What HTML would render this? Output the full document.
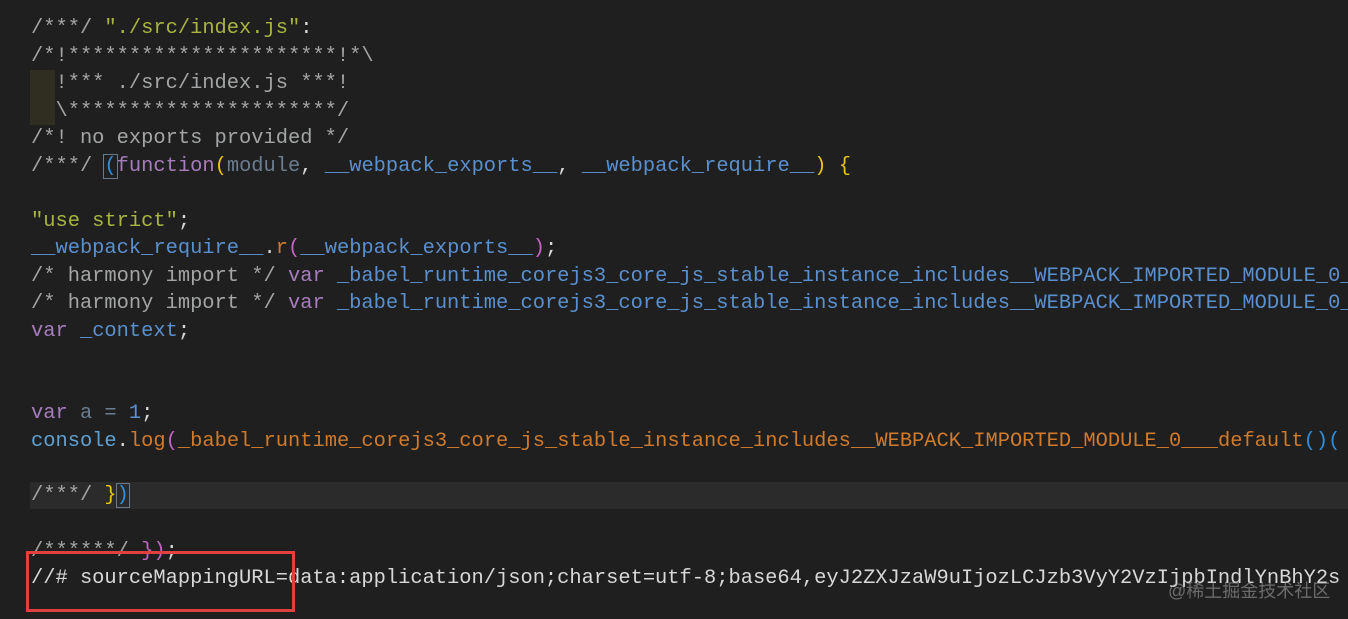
<!DOCTYPE html>
<html><head><meta charset="utf-8"><style>
html,body{margin:0;padding:0;background:#1f1f1f;width:1348px;height:619px;overflow:hidden}
.l{position:absolute;left:31px;height:27.5px;line-height:27.5px;font-family:"Liberation Mono",monospace;font-size:20.4px;white-space:pre;color:#d4d4d4}
.c{color:#a3a5a6}.s{color:#a9b53f}.k{color:#a77cbc}.p{color:#6c7d8f}.b{color:#5a90cf}.o{color:#d07a2c}.y{color:#e9c51a}.m{color:#c464c4}.cb{color:#2f8fde}.w{color:#d8d8d8}
</style></head><body>
<div style="position:absolute;left:30px;top:70px;width:25px;height:55px;background:#2f2e20"></div>
<div style="position:absolute;left:30px;top:482px;width:1318px;height:27px;background:#2b2b2b"></div>
<div class="l" style="top:15px"><span class="c">/***/ </span><span class="s">"./src/index.js"</span><span class="w">:</span></div>
<div class="l" style="top:42.5px"><span class="c">/*!**********************!*\</span></div>
<div class="l" style="top:70px"><span class="c">  !*** ./src/index.js ***!</span></div>
<div class="l" style="top:97.5px"><span class="c">  \**********************/</span></div>
<div class="l" style="top:125px"><span class="c">/*! no exports provided */</span></div>
<div class="l" style="top:152.5px"><span class="c">/***/ </span><span class="cb" style="outline:1px solid #6a7a8a">(</span><span class="k">function</span><span class="y">(</span><span class="p">module</span><span class="w">, </span><span class="b">__webpack_exports__</span><span class="w">, </span><span class="b">__webpack_require__</span><span class="y">) {</span></div>
<div class="l" style="top:207.5px"><span class="s">"use strict"</span><span class="w">;</span></div>
<div class="l" style="top:235px"><span class="b">__webpack_require__</span><span class="w">.</span><span class="o">r</span><span class="m">(</span><span class="b">__webpack_exports__</span><span class="m">)</span><span class="w">;</span></div>
<div class="l" style="top:262.5px"><span class="c">/* harmony import */ </span><span class="k">var</span><span class="b"> _babel_runtime_corejs3_core_js_stable_instance_includes__WEBPACK_IMPORTED_MODULE_0__</span></div>
<div class="l" style="top:290px"><span class="c">/* harmony import */ </span><span class="k">var</span><span class="b"> _babel_runtime_corejs3_core_js_stable_instance_includes__WEBPACK_IMPORTED_MODULE_0__</span></div>
<div class="l" style="top:317.5px"><span class="k">var</span><span class="b"> _context</span><span class="w">;</span></div>
<div class="l" style="top:400px"><span class="k">var</span><span class="p"> a = </span><span class="b">1</span><span class="w">;</span></div>
<div class="l" style="top:427.5px"><span class="b" style="color:#5fa0d0">console</span><span class="w">.</span><span class="o">log</span><span class="m">(</span><span class="o">_babel_runtime_corejs3_core_js_stable_instance_includes__WEBPACK_IMPORTED_MODULE_0___default</span><span class="cb">()(</span></div>
<div class="l" style="top:482px"><span class="c">/***/ </span><span class="y">}</span><span class="cb" style="outline:1px solid #6a7a8a">)</span></div>
<div class="l" style="top:537.5px"><span class="c">/******/ </span><span class="m">})</span><span class="w">;</span></div>
<div class="l" style="top:565px"><span class="w">//# sourceMappingURL=data:application/json;charset=utf-8;base64,eyJ2ZXJzaW9uIjozLCJzb3VyY2VzIjpbIndlYnBhY2s</span></div>
<div style="position:absolute;left:26px;top:551px;width:263px;height:55px;border:3px solid #e0403f"></div>
<div style="position:absolute;left:1168px;top:577px;font-family:'Liberation Sans','Noto Sans CJK SC',sans-serif;font-size:18px;color:rgba(170,170,170,0.55)">@稀土掘金技术社区</div>
</body></html>
